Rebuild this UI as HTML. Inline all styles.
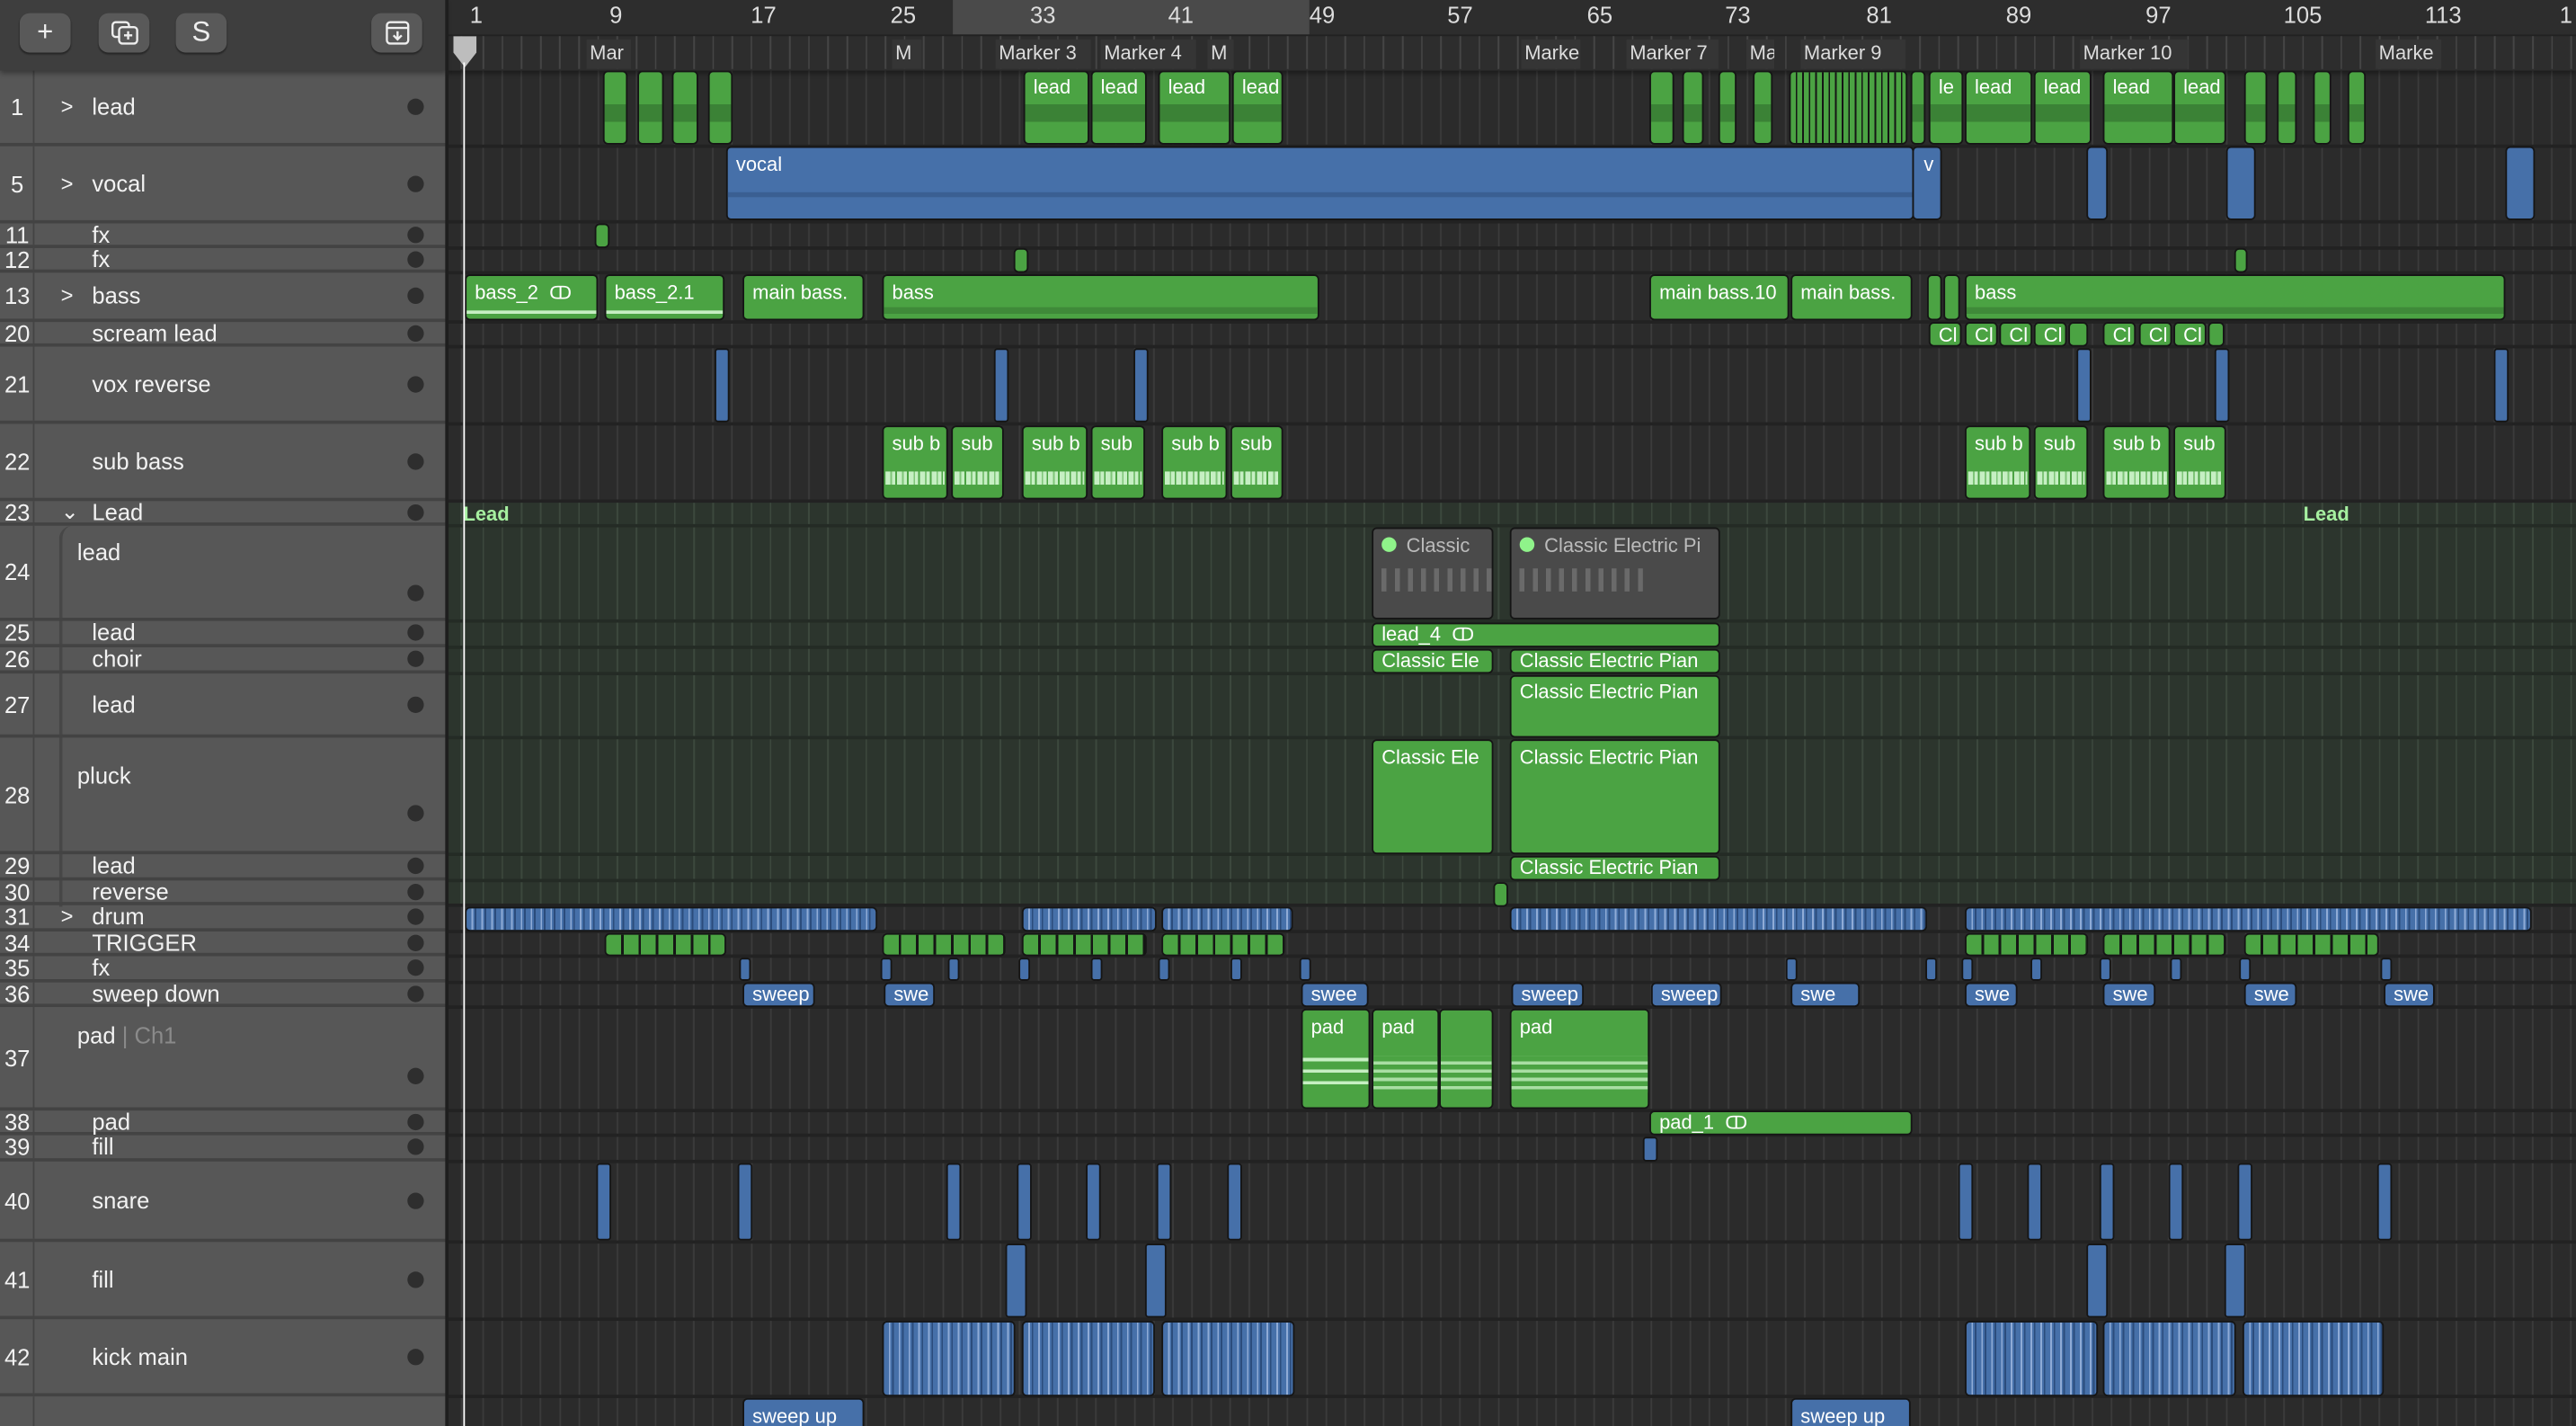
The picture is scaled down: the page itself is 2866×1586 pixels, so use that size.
<!DOCTYPE html>
<html><head><meta charset="utf-8"><style>
*{margin:0;padding:0;box-sizing:border-box}
html,body{width:2866px;height:1586px;overflow:hidden;background:#2b2b2b}
#w{position:absolute;left:0;top:0;width:1568px;height:868px;transform:scale(1.82781,1.82719);transform-origin:0 0;font-family:"Liberation Sans",sans-serif;overflow:hidden;background:#2b2b2b}
.abs{position:absolute}
#hdr{left:0;top:0;width:272px;height:868px;background:#575757}
#tb{left:0;top:0;width:272px;height:43px;background:#3e3e3e;box-shadow:0 2px 3px rgba(0,0,0,.35)}
.btn{position:absolute;top:8px;width:31px;height:24px;border-radius:6px;background:#595959;color:#eee;font-size:17px;text-align:center;line-height:24px;box-shadow:0 1px 1px rgba(0,0,0,.4)}
.tr{position:absolute;left:0;width:272px;border-bottom:2px solid #434343;color:#f2f2f2;font-size:14px}
.tr .n{position:absolute;left:0;width:21px;text-align:center;border-right:1px solid #444;height:100%}
.tr .n span{position:absolute;left:0;width:21px;top:50%;transform:translateY(-50%)}
.tr .nm{position:absolute;left:56px;top:50%;transform:translateY(-52%)}
.tr .ch{position:absolute;left:37px;top:50%;transform:translateY(-52%);font-size:13px}
.tr .d{position:absolute;left:248px;top:50%;margin-top:-5px;width:10px;height:10px;border-radius:50%;background:#2e2e2e}
#ar{left:272px;top:43px;width:1296px;height:825px;background:#2b2b2b;
background-image:repeating-linear-gradient(90deg,transparent 0,transparent 10.66px,#3b3b3b 10.66px,#3b3b3b 11.66px);background-position:11px 0}
#grp{left:272px;top:305px;width:1296px;height:247px;background:#2c352d;
background-image:repeating-linear-gradient(90deg,transparent 0,transparent 10.66px,#3c483d 10.66px,#3c483d 11.66px);background-position:11px 0}
.sep{position:absolute;left:272px;width:1296px;height:2px;background:#222}
.r{position:absolute;border:1px solid #151515;border-radius:3px;color:#fff;font-size:12px;padding:0 0 0 5px;overflow:hidden;white-space:nowrap;line-height:14px}
.g{background:#4ba343}
.b{background:#4670a9}
.k{background:#4a4a4a;color:#bbb}
.gw{background:#4ba343 linear-gradient(#4ba343 0,#4ba343 45%,#3b8236 45%,#3b8236 70%,#4ba343 70%)}
.dr{background:#4670a9 repeating-linear-gradient(90deg,#4670a9 0,#4670a9 3px,#8fabd6 3px,#8fabd6 4px,#4670a9 4px,#4670a9 5px,#2b4c7c 5px,#2b4c7c 6px)}
.sb::after{content:"";position:absolute;left:1px;right:1px;bottom:8px;height:8px;background:repeating-linear-gradient(90deg,#c6efc3 0,#c6efc3 3px,#7fc578 3px,#7fc578 4px,#c6efc3 4px,#c6efc3 6px,#4ba343 6px,#4ba343 7px)}
.tk{position:absolute;top:2px;bottom:2px;width:9px;border:1px solid #151515;border-radius:2px;background:#4670a9}
.mk{position:absolute;top:24px;height:18px;background:#353535;color:#ddd;font-size:12px;line-height:16px;padding-left:2px;overflow:hidden;white-space:nowrap}
.bn{position:absolute;top:1px;color:#ddd;font-size:14px}
</style></head><body><div id="w">

<div id="ar" class="abs"></div>
<div id="grp" class="abs"></div>
<div class="sep" style="top:88px"></div><div class="sep" style="top:134px"></div><div class="sep" style="top:150px"></div><div class="sep" style="top:165px"></div><div class="sep" style="top:195px"></div><div class="sep" style="top:210px"></div><div class="sep" style="top:257px"></div><div class="sep" style="top:304px"></div><div class="sep" style="top:319px;background:#242b25"></div><div class="sep" style="top:377px;background:#242b25"></div><div class="sep" style="top:393px;background:#242b25"></div><div class="sep" style="top:409px;background:#242b25"></div><div class="sep" style="top:448px;background:#242b25"></div><div class="sep" style="top:519px;background:#242b25"></div><div class="sep" style="top:535px;background:#242b25"></div><div class="sep" style="top:550px"></div><div class="sep" style="top:566px"></div><div class="sep" style="top:581px"></div><div class="sep" style="top:597px"></div><div class="sep" style="top:612px"></div><div class="sep" style="top:675px"></div><div class="sep" style="top:690px"></div><div class="sep" style="top:706px"></div><div class="sep" style="top:755px"></div><div class="sep" style="top:802px"></div><div class="sep" style="top:849px"></div>

<div class="abs" style="left:272px;top:0;width:1296px;height:43px;background:#2d2d2d;box-shadow:0 2px 3px rgba(0,0,0,.4)"></div>
<div class="abs" style="left:580px;top:0;width:217px;height:21px;background:#4a4a4a"></div>
<div class="abs" style="left:272px;top:21px;width:1296px;height:1px;background:#222"></div>
<div class="abs" style="left:272px;top:22px;width:1296px;height:20px;background:repeating-linear-gradient(90deg,transparent 0,transparent 10.66px,#454545 10.66px,#454545 11.66px);background-position:11px 0"></div>
<div class="bn" style="left:286px">1</div><div class="bn" style="left:371px">9</div><div class="bn" style="left:457px">17</div><div class="bn" style="left:542px">25</div><div class="bn" style="left:627px">33</div><div class="bn" style="left:711px">41</div><div class="bn" style="left:797px">49</div><div class="bn" style="left:881px">57</div><div class="bn" style="left:966px">65</div><div class="bn" style="left:1050px">73</div><div class="bn" style="left:1136px">81</div><div class="bn" style="left:1221px">89</div><div class="bn" style="left:1306px">97</div><div class="bn" style="left:1390px">105</div><div class="bn" style="left:1476px">113</div><div class="bn" style="left:1558px">1</div>
<div class="mk" style="left:357px;width:27px">Mar</div><div class="mk" style="left:543px;width:18px">M</div><div class="mk" style="left:606px;width:58px">Marker 3</div><div class="mk" style="left:670px;width:58px">Marker 4</div><div class="mk" style="left:735px;width:16px">M</div><div class="mk" style="left:926px;width:36px">Marke</div><div class="mk" style="left:990px;width:56px">Marker 7</div><div class="mk" style="left:1063px;width:17px">Ma</div><div class="mk" style="left:1096px;width:64px">Marker 9</div><div class="mk" style="left:1266px;width:66px">Marker 10</div><div class="mk" style="left:1446px;width:40px">Marke</div>
<svg class="abs" style="left:274px;top:22px" width="18" height="20"><path d="M2 0H16V10L9 19L2 10Z" fill="#bdbdbd"/></svg>

<div class="r gw" style="left:367px;top:43px;width:15px;height:45px"></div><div class="r gw" style="left:388px;top:43px;width:16px;height:45px"></div><div class="r gw" style="left:409px;top:43px;width:16px;height:45px"></div><div class="r gw" style="left:431px;top:43px;width:15px;height:45px"></div>
<div class="r gw" style="left:623px;top:43px;width:40px;height:45px;padding-top:2px">lead</div><div class="r gw" style="left:664px;top:43px;width:34px;height:45px;padding-top:2px">lead</div><div class="r gw" style="left:705px;top:43px;width:44px;height:45px;padding-top:2px">lead</div><div class="r gw" style="left:750px;top:43px;width:31px;height:45px;padding-top:2px">lead</div>
<div class="r gw" style="left:1004px;top:43px;width:15px;height:45px"></div><div class="r gw" style="left:1024px;top:43px;width:13px;height:45px"></div><div class="r gw" style="left:1046px;top:43px;width:11px;height:45px"></div><div class="r gw" style="left:1067px;top:43px;width:12px;height:45px"></div>
<div class="r" style="left:1089px;top:43px;width:72px;height:45px;background:#4ba343 repeating-linear-gradient(90deg,#4ba343 0,#4ba343 3px,#151515 3px,#151515 4px)"></div>
<div class="r gw" style="left:1163px;top:43px;width:9px;height:45px"></div><div class="r gw" style="left:1174px;top:43px;width:21px;height:45px;padding-top:2px">le</div><div class="r gw" style="left:1196px;top:43px;width:41px;height:45px;padding-top:2px">lead</div><div class="r gw" style="left:1238px;top:43px;width:35px;height:45px;padding-top:2px">lead</div><div class="r gw" style="left:1280px;top:43px;width:43px;height:45px;padding-top:2px">lead</div><div class="r gw" style="left:1323px;top:43px;width:32px;height:45px;padding-top:2px">lead</div>
<div class="r gw" style="left:1366px;top:43px;width:14px;height:45px"></div><div class="r gw" style="left:1386px;top:43px;width:12px;height:45px"></div><div class="r gw" style="left:1408px;top:43px;width:11px;height:45px"></div><div class="r gw" style="left:1429px;top:43px;width:11px;height:45px"></div>

<div class="r b" style="left:442px;top:89px;width:723px;height:45px;padding-top:3px">vocal<div class="abs" style="left:0;right:0;top:27px;height:3px;background:#3a5f92"></div></div>
<div class="r b" style="left:1164px;top:89px;width:18px;height:45px;padding-left:6px;padding-top:3px">v</div>
<div class="r b" style="left:1270px;top:89px;width:13px;height:45px"></div><div class="r b" style="left:1355px;top:89px;width:18px;height:45px"></div><div class="r b" style="left:1525px;top:89px;width:18px;height:45px"></div>

<div class="r g" style="left:362px;top:136px;width:9px;height:15px"></div><div class="r g" style="left:617px;top:151px;width:9px;height:15px"></div><div class="r g" style="left:1360px;top:151px;width:8px;height:15px"></div>

<div class="r g" style="left:283px;top:167px;width:81px;height:28px;padding-top:3px">bass_2 &nbsp;<span style="font-size:11px">ↀ</span><div class="abs" style="left:0;right:0;bottom:3px;height:2px;background:#c6efc3"></div></div>
<div class="r g" style="left:368px;top:167px;width:73px;height:28px;padding-top:3px">bass_2.1<div class="abs" style="left:0;right:0;bottom:3px;height:2px;background:#c6efc3"></div></div>
<div class="r g" style="left:452px;top:167px;width:74px;height:28px;padding-top:3px">main bass.</div>
<div class="r g" style="left:537px;top:167px;width:266px;height:28px;padding-top:3px">bass<div class="abs" style="left:0;right:0;bottom:3px;height:4px;background:#3f8a39"></div></div>
<div class="r g" style="left:1004px;top:167px;width:85px;height:28px;padding-top:3px">main bass.10</div>
<div class="r g" style="left:1090px;top:167px;width:74px;height:28px;padding-top:3px">main bass.</div>
<div class="r g" style="left:1173px;top:167px;width:9px;height:28px"></div><div class="r g" style="left:1183px;top:167px;width:10px;height:28px"></div>
<div class="r g" style="left:1196px;top:167px;width:329px;height:28px;padding-top:3px">bass<div class="abs" style="left:0;right:0;bottom:3px;height:4px;background:#3f8a39"></div></div>

<div class="r g" style="left:1174px;top:196px;width:20px;height:15px">Cl</div><div class="r g" style="left:1196px;top:196px;width:20px;height:15px">Cl</div><div class="r g" style="left:1217px;top:196px;width:20px;height:15px">Cl</div><div class="r g" style="left:1238px;top:196px;width:20px;height:15px">Cl</div><div class="r g" style="left:1259px;top:196px;width:12px;height:15px"></div><div class="r g" style="left:1280px;top:196px;width:20px;height:15px">Cl</div><div class="r g" style="left:1302px;top:196px;width:20px;height:15px">Cl</div><div class="r g" style="left:1323px;top:196px;width:20px;height:15px">Cl</div><div class="r g" style="left:1344px;top:196px;width:10px;height:15px"></div>

<div class="tk" style="left:435px;top:212px;height:45px"></div><div class="tk" style="left:605px;top:212px;height:45px"></div><div class="tk" style="left:690px;top:212px;height:45px"></div><div class="tk" style="left:1264px;top:212px;height:45px"></div><div class="tk" style="left:1348px;top:212px;height:45px"></div><div class="tk" style="left:1518px;top:212px;height:45px"></div>

<div class="r g sb" style="left:537px;top:259px;width:40px;height:45px;padding-top:3px">sub b</div><div class="r g sb" style="left:579px;top:259px;width:32px;height:45px;padding-top:3px">sub</div><div class="r g sb" style="left:622px;top:259px;width:40px;height:45px;padding-top:3px">sub b</div><div class="r g sb" style="left:664px;top:259px;width:33px;height:45px;padding-top:3px">sub</div><div class="r g sb" style="left:707px;top:259px;width:40px;height:45px;padding-top:3px">sub b</div><div class="r g sb" style="left:749px;top:259px;width:32px;height:45px;padding-top:3px">sub</div>
<div class="r g sb" style="left:1196px;top:259px;width:40px;height:45px;padding-top:3px">sub b</div><div class="r g sb" style="left:1238px;top:259px;width:33px;height:45px;padding-top:3px">sub</div><div class="r g sb" style="left:1280px;top:259px;width:41px;height:45px;padding-top:3px">sub b</div><div class="r g sb" style="left:1323px;top:259px;width:32px;height:45px;padding-top:3px">sub</div>

<div class="abs" style="left:282px;top:306px;color:#a6f0a0;font-size:12px;font-weight:bold">Lead</div>
<div class="abs" style="left:1402px;top:306px;color:#a6f0a0;font-size:12px;font-weight:bold">Lead</div>
<div class="r k" style="left:835px;top:321px;width:74px;height:56px;padding-top:3px"><span style="display:inline-block;width:9px;height:9px;border-radius:50%;background:#8ff38a;margin-right:6px"></span>Classic<div class="abs" style="left:0;right:0;top:24px;height:14px;background:repeating-linear-gradient(90deg,transparent 0,transparent 5px,#8a8a8a 5px,#8a8a8a 8px);opacity:.5"></div></div>
<div class="r k" style="left:919px;top:321px;width:128px;height:56px;padding-top:3px"><span style="display:inline-block;width:9px;height:9px;border-radius:50%;background:#8ff38a;margin-right:6px"></span>Classic Electric Pi<div class="abs" style="left:0;width:80px;top:24px;height:14px;background:repeating-linear-gradient(90deg,transparent 0,transparent 5px,#8a8a8a 5px,#8a8a8a 8px);opacity:.5"></div></div>
<div class="r g" style="left:835px;top:379px;width:212px;height:15px;line-height:13px">lead_4 &nbsp;<span style="font-size:11px">ↀ</span></div>
<div class="r g" style="left:835px;top:395px;width:74px;height:15px;line-height:13px">Classic Ele</div><div class="r g" style="left:919px;top:395px;width:128px;height:15px;line-height:13px">Classic Electric Pian</div>
<div class="r g" style="left:919px;top:411px;width:128px;height:38px;padding-top:2px">Classic Electric Pian</div>
<div class="r g" style="left:835px;top:450px;width:74px;height:70px;padding-top:3px">Classic Ele</div><div class="r g" style="left:919px;top:450px;width:128px;height:70px;padding-top:3px">Classic Electric Pian</div>
<div class="r g" style="left:919px;top:521px;width:128px;height:15px;line-height:13px">Classic Electric Pian</div>
<div class="r g" style="left:909px;top:537px;width:9px;height:15px"></div>

<div class="r dr" style="left:283px;top:552px;width:251px;height:15px"></div><div class="r dr" style="left:622px;top:552px;width:82px;height:15px"></div><div class="r dr" style="left:707px;top:552px;width:80px;height:15px"></div><div class="r dr" style="left:919px;top:552px;width:254px;height:15px"></div><div class="r dr" style="left:1196px;top:552px;width:345px;height:15px"></div>

<div class="r" style="left:368px;top:568px;width:74px;height:14px;background:#4ba343 repeating-linear-gradient(90deg,#4ba343 0,#4ba343 9px,#151515 9px,#151515 10.6px)"></div><div class="r" style="left:537px;top:568px;width:75px;height:14px;background:#4ba343 repeating-linear-gradient(90deg,#4ba343 0,#4ba343 9px,#151515 9px,#151515 10.6px)"></div><div class="r" style="left:622px;top:568px;width:76px;height:14px;background:#4ba343 repeating-linear-gradient(90deg,#4ba343 0,#4ba343 9px,#151515 9px,#151515 10.6px)"></div><div class="r" style="left:707px;top:568px;width:75px;height:14px;background:#4ba343 repeating-linear-gradient(90deg,#4ba343 0,#4ba343 9px,#151515 9px,#151515 10.6px)"></div><div class="r" style="left:1196px;top:568px;width:75px;height:14px;background:#4ba343 repeating-linear-gradient(90deg,#4ba343 0,#4ba343 9px,#151515 9px,#151515 10.6px)"></div><div class="r" style="left:1280px;top:568px;width:75px;height:14px;background:#4ba343 repeating-linear-gradient(90deg,#4ba343 0,#4ba343 9px,#151515 9px,#151515 10.6px)"></div><div class="r" style="left:1366px;top:568px;width:82px;height:14px;background:#4ba343 repeating-linear-gradient(90deg,#4ba343 0,#4ba343 9px,#151515 9px,#151515 10.6px)"></div>

<div class="tk" style="left:450px;top:583px;height:14px;width:7px"></div><div class="tk" style="left:536px;top:583px;height:14px;width:7px"></div><div class="tk" style="left:577px;top:583px;height:14px;width:7px"></div><div class="tk" style="left:620px;top:583px;height:14px;width:7px"></div><div class="tk" style="left:664px;top:583px;height:14px;width:7px"></div><div class="tk" style="left:705px;top:583px;height:14px;width:7px"></div><div class="tk" style="left:749px;top:583px;height:14px;width:7px"></div><div class="tk" style="left:791px;top:583px;height:14px;width:7px"></div><div class="tk" style="left:1087px;top:583px;height:14px;width:7px"></div><div class="tk" style="left:1172px;top:583px;height:14px;width:7px"></div><div class="tk" style="left:1194px;top:583px;height:14px;width:7px"></div><div class="tk" style="left:1236px;top:583px;height:14px;width:7px"></div><div class="tk" style="left:1278px;top:583px;height:14px;width:7px"></div><div class="tk" style="left:1321px;top:583px;height:14px;width:7px"></div><div class="tk" style="left:1363px;top:583px;height:14px;width:7px"></div><div class="tk" style="left:1449px;top:583px;height:14px;width:7px"></div>

<div class="r b" style="left:452px;top:598px;width:44px;height:15px;line-height:13px">sweep</div><div class="r b" style="left:538px;top:598px;width:31px;height:15px;line-height:13px">swe</div><div class="r b" style="left:792px;top:598px;width:41px;height:15px;line-height:13px">swee</div><div class="r b" style="left:920px;top:598px;width:44px;height:15px;line-height:13px">sweep</div><div class="r b" style="left:1005px;top:598px;width:43px;height:15px;line-height:13px">sweep</div><div class="r b" style="left:1090px;top:598px;width:42px;height:15px;line-height:13px">swe</div><div class="r b" style="left:1196px;top:598px;width:32px;height:15px;line-height:13px">swe</div><div class="r b" style="left:1280px;top:598px;width:32px;height:15px;line-height:13px">swe</div><div class="r b" style="left:1366px;top:598px;width:32px;height:15px;line-height:13px">swe</div><div class="r b" style="left:1451px;top:598px;width:31px;height:15px;line-height:13px">swe</div>

<div class="r g" style="left:792px;top:614px;width:42px;height:61px;padding-top:3px">pad<div class="abs" style="left:0;right:0;top:24px;height:22px;background:repeating-linear-gradient(#4ba343 0,#4ba343 5px,#c6efc3 5px,#c6efc3 7px)"></div></div>
<div class="r g" style="left:835px;top:614px;width:41px;height:61px;padding-top:3px">pad<div class="abs" style="left:0;right:0;top:28px;height:22px;background:repeating-linear-gradient(#4ba343 0,#4ba343 3px,#a9dea4 3px,#a9dea4 5px)"></div></div>
<div class="r g" style="left:876px;top:614px;width:33px;height:61px"><div class="abs" style="left:0;right:0;top:28px;height:22px;background:repeating-linear-gradient(#4ba343 0,#4ba343 3px,#a9dea4 3px,#a9dea4 5px)"></div></div>
<div class="r g" style="left:919px;top:614px;width:85px;height:61px;padding-top:3px">pad<div class="abs" style="left:0;right:0;top:28px;height:22px;background:repeating-linear-gradient(#4ba343 0,#4ba343 3px,#a9dea4 3px,#a9dea4 5px)"></div></div>
<div class="r g" style="left:1004px;top:676px;width:160px;height:15px;line-height:13px">pad_1 &nbsp;<span style="font-size:11px">ↀ</span></div>
<div class="tk" style="left:1000px;top:692px;height:15px"></div>

<div class="tk" style="left:363px;top:708px;height:47px"></div><div class="tk" style="left:449px;top:708px;height:47px"></div><div class="tk" style="left:576px;top:708px;height:47px"></div><div class="tk" style="left:619px;top:708px;height:47px"></div><div class="tk" style="left:661px;top:708px;height:47px"></div><div class="tk" style="left:704px;top:708px;height:47px"></div><div class="tk" style="left:747px;top:708px;height:47px"></div><div class="tk" style="left:1192px;top:708px;height:47px"></div><div class="tk" style="left:1234px;top:708px;height:47px"></div><div class="tk" style="left:1278px;top:708px;height:47px"></div><div class="tk" style="left:1320px;top:708px;height:47px"></div><div class="tk" style="left:1362px;top:708px;height:47px"></div><div class="tk" style="left:1447px;top:708px;height:47px"></div>

<div class="tk" style="left:612px;top:757px;height:45px;width:13px"></div><div class="tk" style="left:697px;top:757px;height:45px;width:13px"></div><div class="tk" style="left:1270px;top:757px;height:45px;width:13px"></div><div class="tk" style="left:1354px;top:757px;height:45px;width:13px"></div>

<div class="r dr" style="left:537px;top:804px;width:81px;height:46px"></div><div class="r dr" style="left:622px;top:804px;width:81px;height:46px"></div><div class="r dr" style="left:707px;top:804px;width:81px;height:46px"></div><div class="r dr" style="left:1196px;top:804px;width:81px;height:46px"></div><div class="r dr" style="left:1280px;top:804px;width:81px;height:46px"></div><div class="r dr" style="left:1365px;top:804px;width:86px;height:46px"></div>
<div class="r b" style="left:452px;top:851px;width:74px;height:20px;padding-top:3px">sweep up</div><div class="r b" style="left:1090px;top:851px;width:73px;height:20px;padding-top:3px">sweep up</div>

<div class="abs" style="left:282px;top:38px;width:1px;height:830px;background:#fff"></div>

<div id="hdr" class="abs">
<div class="tr" style="top:43px;height:46px"><div class="n"><span>1</span></div><span class="ch">&gt;</span><span class="nm">lead</span><i class="d"></i></div>
<div class="tr" style="top:89px;height:47px"><div class="n"><span>5</span></div><span class="ch">&gt;</span><span class="nm">vocal</span><i class="d"></i></div>
<div class="tr" style="top:136px;height:15px"><div class="n"><span>11</span></div><span class="nm">fx</span><i class="d"></i></div>
<div class="tr" style="top:151px;height:15px"><div class="n"><span>12</span></div><span class="nm">fx</span><i class="d"></i></div>
<div class="tr" style="top:166px;height:30px"><div class="n"><span>13</span></div><span class="ch">&gt;</span><span class="nm">bass</span><i class="d"></i></div>
<div class="tr" style="top:196px;height:15px"><div class="n"><span>20</span></div><span class="nm">scream lead</span><i class="d"></i></div>
<div class="tr" style="top:211px;height:47px"><div class="n"><span>21</span></div><span class="nm">vox reverse</span><i class="d"></i></div>
<div class="tr" style="top:258px;height:47px"><div class="n"><span>22</span></div><span class="nm">sub bass</span><i class="d"></i></div>
<div class="tr" style="top:305px;height:15px"><div class="n"><span>23</span></div><span class="ch">&#8964;</span><span class="nm">Lead</span><i class="d"></i></div>
<div class="abs" style="left:36px;top:320px;width:236px;height:232px;border-left:2px solid #474747;border-top-left-radius:8px"></div>
<div class="tr" style="top:320px;height:58px"><div class="n"><span>24</span></div><span class="abs" style="left:47px;top:8px">lead</span><i class="d" style="top:auto;bottom:10px"></i></div>
<div class="tr" style="top:378px;height:16px"><div class="n"><span>25</span></div><span class="nm">lead</span><i class="d"></i></div>
<div class="tr" style="top:394px;height:16px"><div class="n"><span>26</span></div><span class="nm">choir</span><i class="d"></i></div>
<div class="tr" style="top:410px;height:39px"><div class="n"><span>27</span></div><span class="nm">lead</span><i class="d"></i></div>
<div class="tr" style="top:449px;height:71px"><div class="n"><span>28</span></div><span class="abs" style="left:47px;top:15px">pluck</span><i class="d" style="top:auto;bottom:18px"></i></div>
<div class="tr" style="top:520px;height:16px"><div class="n"><span>29</span></div><span class="nm">lead</span><i class="d"></i></div>
<div class="tr" style="top:536px;height:15px"><div class="n"><span>30</span></div><span class="nm">reverse</span><i class="d"></i></div>
<div class="tr" style="top:551px;height:16px"><div class="n"><span>31</span></div><span class="ch">&gt;</span><span class="nm">drum</span><i class="d"></i></div>
<div class="tr" style="top:567px;height:15px"><div class="n"><span>34</span></div><span class="nm">TRIGGER</span><i class="d"></i></div>
<div class="tr" style="top:582px;height:16px"><div class="n"><span>35</span></div><span class="nm">fx</span><i class="d"></i></div>
<div class="tr" style="top:598px;height:15px"><div class="n"><span>36</span></div><span class="nm">sweep down</span><i class="d"></i></div>
<div class="tr" style="top:613px;height:63px"><div class="n"><span>37</span></div><span class="abs" style="left:47px;top:9px">pad <span style="color:#8a8a8a">| Ch1</span></span><i class="d" style="top:auto;bottom:14px"></i></div>
<div class="tr" style="top:676px;height:15px"><div class="n"><span>38</span></div><span class="nm">pad</span><i class="d"></i></div>
<div class="tr" style="top:691px;height:16px"><div class="n"><span>39</span></div><span class="nm">fill</span><i class="d"></i></div>
<div class="tr" style="top:707px;height:49px"><div class="n"><span>40</span></div><span class="nm">snare</span><i class="d"></i></div>
<div class="tr" style="top:756px;height:47px"><div class="n"><span>41</span></div><span class="nm">fill</span><i class="d"></i></div>
<div class="tr" style="top:803px;height:47px"><div class="n"><span>42</span></div><span class="nm">kick main</span><i class="d"></i></div>
<div class="tr" style="top:850px;height:30px;border:0"><div class="n"></div></div>
</div>
<div id="tb" class="abs">
<div class="btn" style="left:12px">+</div>
<div class="btn" style="left:60px"><svg width="18" height="16" style="margin-top:4px" viewBox="0 0 18 16"><rect x="1.5" y="1.5" width="10" height="9" rx="2" fill="none" stroke="#eee" stroke-width="1.3"/><rect x="5.5" y="4.5" width="11" height="10" rx="2" fill="#595959" stroke="#eee" stroke-width="1.3"/><path d="M11 7v5M8.5 9.5h5" stroke="#eee" stroke-width="1.3"/></svg></div>
<div class="btn" style="left:107px">S</div>
<div class="btn" style="left:226px"><svg width="16" height="16" style="margin-top:4px" viewBox="0 0 16 16"><rect x="1.5" y="1.5" width="13" height="13" rx="2" fill="none" stroke="#eee" stroke-width="1.3"/><path d="M1.5 5h13M8 7v5M5.5 9.5L8 12l2.5-2.5" fill="none" stroke="#eee" stroke-width="1.3"/></svg></div>
</div>
<div class="abs" style="left:271px;top:0;width:2px;height:868px;background:#1e1e1e"></div>
</div></body></html>
